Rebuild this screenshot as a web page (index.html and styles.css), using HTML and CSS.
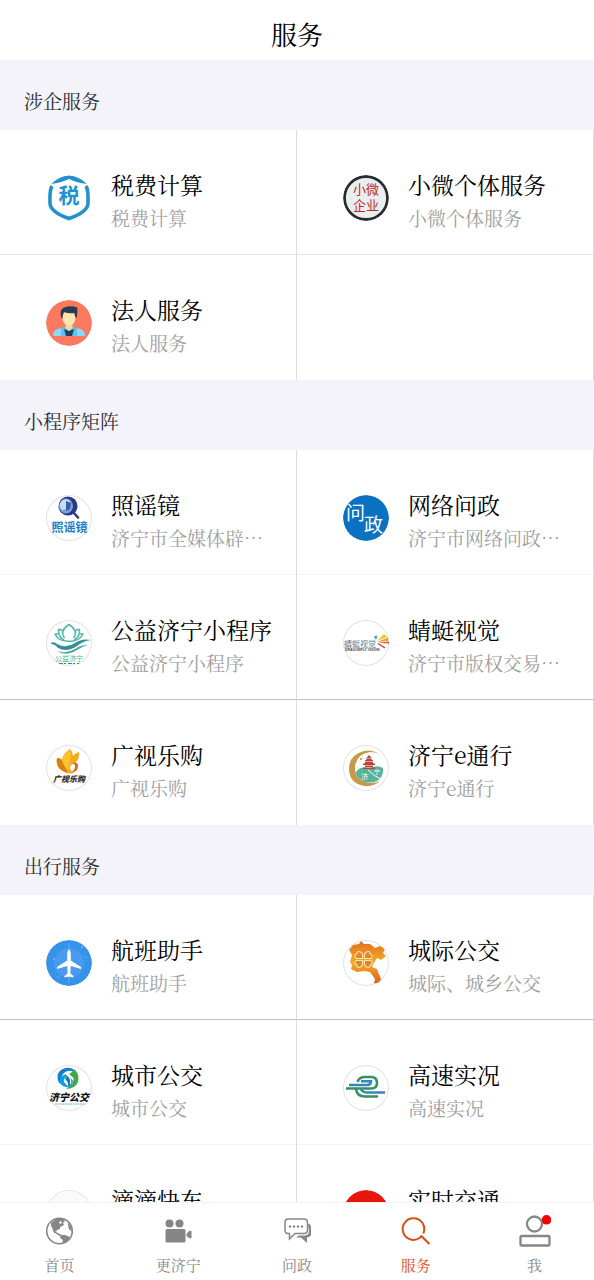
FILE: index.html
```html
<!DOCTYPE html>
<html lang="zh-CN">
<head>
<meta charset="utf-8">
<meta name="viewport" content="width=device-width, initial-scale=1">
<title>服务</title>
<link rel="stylesheet" href="styles.css">
</head>
<body>
<div class="app">
  <header class="topbar"><h1 class="topbar-title">服务</h1></header>

  <main class="content">
    <section>
      <h2 class="section-title">涉企服务</h2>
      <div class="grid">
        <a class="cell" href="#">
          <svg class="icon" viewBox="0 0 46 46" aria-hidden="true">
            <path d="M6 11Q3.500 15 4 28Q4 37 23 43.500Q42 37 42 28Q42.500 15 40 11" fill="none" stroke="#2391cf" stroke-width="3.600"/>
            <path d="M5 9Q13 1 23 0.500Q33 1 41 9Q31 8 23 4Q15 8 5 9Z" fill="#2391cf"/>
            <text class="glyph-bold" x="23" y="28" font-size="21" text-anchor="middle" fill="#2391cf">税</text>
          </svg>
          <div class="info"><h3 class="name">税费计算</h3><p class="desc">税费计算</p></div>
        </a>
        <a class="cell" href="#">
          <svg class="icon" viewBox="0 0 46 46" aria-hidden="true">
            <circle cx="23" cy="23" r="21.500" fill="#e9eeee" stroke="#2a2b2d" stroke-width="2.800"/>
            <text class="glyph" x="23" y="19" font-size="13" text-anchor="middle" fill="#c4282d">小微</text>
            <text class="glyph" x="23" y="35" font-size="13" text-anchor="middle" fill="#c4282d">企业</text>
          </svg>
          <div class="info"><h3 class="name">小微个体服务</h3><p class="desc">小微个体服务</p></div>
        </a>
        <a class="cell" href="#">
          <svg class="icon" viewBox="0 0 46 46" aria-hidden="true">
            <circle cx="23" cy="23" r="23" fill="#fb7a5f"/>
            <path d="M7 36Q7 30 12 29L19 27H27L34 29Q39 30 39 36Z" fill="#62c1ee"/>
            <path d="M7 36Q7 30 12 29L15 28V36ZM39 36Q39 30 34 29L31 28V36Z" fill="#8fd8f5"/>
            <path d="M18 29L23 31L28 29L26 36H20Z" fill="#293f58"/>
            <path d="M19.500 22H26.500V28L23 31L19.500 28Z" fill="#f5d9a0"/>
            <ellipse cx="23" cy="18" rx="6.500" ry="7.500" fill="#ffe5b0"/>
            <path d="M15.500 18Q13 11 17 8Q21 5.500 27 6.500L28 5.500L28 7L31 7Q32 11 30.500 18Q29 18 28.500 13Q23 14 18 12Q17 13 16.500 18Z" fill="#273b52"/>
          </svg>
          <div class="info"><h3 class="name">法人服务</h3><p class="desc">法人服务</p></div>
        </a>
        <div class="cell"></div>
      </div>
    </section>

    <section>
      <h2 class="section-title">小程序矩阵</h2>
      <div class="grid">
        <a class="cell line-faint" href="#">
          <svg class="icon ringed" viewBox="0 0 46 46" aria-hidden="true">
            <path d="M27 17L32 22.500" stroke="#2b3b86" stroke-width="2.600" stroke-linecap="round"/>
            <circle cx="22" cy="11" r="9.500" fill="#27398a"/>
            <ellipse cx="20" cy="11" rx="7" ry="7.500" fill="#7d9fd5"/>
            <path d="M15 7Q19 2 24 6L21 14L16 15Q12 11 15 7Z" fill="#c8dcf3"/>
            <path d="M20 6L25 8L24 14L20 16Z" fill="#3c5bab"/>
            <text class="glyph-bold" x="23.500" y="37" font-size="12" text-anchor="middle" fill="#1f80c4">照谣镜</text>
          </svg>
          <div class="info"><h3 class="name">照谣镜</h3><p class="desc">济宁市全媒体辟…</p></div>
        </a>
        <a class="cell line-faint" href="#">
          <svg class="icon" viewBox="0 0 46 46" aria-hidden="true">
            <circle cx="23" cy="23" r="23" fill="#0b72c2"/>
            <text class="glyph" x="3" y="25" font-size="19" fill="#fff">问</text>
            <text class="glyph" x="21" y="37" font-size="19" fill="#fff">政</text>
          </svg>
          <div class="info"><h3 class="name">网络问政</h3><p class="desc">济宁市网络问政…</p></div>
        </a>
        <a class="cell line-strong" href="#">
          <svg class="icon ringed" viewBox="0 0 46 46" aria-hidden="true">
            <g fill="none" stroke="#55b8aa" stroke-width="1.600" stroke-linejoin="round">
              <path d="M18.500 18Q13 11 23 4.500Q33 11 27.500 18"/>
              <path d="M17 11Q14 9 12.500 9.500Q12 17 18 20M29 11Q32 9 33.500 9.500Q34 17 28 20"/>
              <path d="M12 14L9 14Q12 20.500 20 21Q24 21.500 27 21Q34 20 37 14L34 14"/>
            </g>
            <path d="M5 23Q8 21 11 24Q20 29 29 23Q36 18 45 20Q37 21 31 26Q21 33 12 28Q9 24 5 24Z" fill="#348f99"/>
            <path d="M11 31Q20 34 29 29Q34 25 42 25Q35 27 31 30Q20 37 11 31Z" fill="#51aa9d"/>
            <text class="glyph" x="23" y="41" font-size="7" text-anchor="middle" fill="#45b68c">公益济宁</text>
            <path d="M13 43.500H34" stroke="#398399" stroke-width="1" stroke-dasharray="4 1 2 2"/>
          </svg>
          <div class="info"><h3 class="name">公益济宁小程序</h3><p class="desc">公益济宁小程序</p></div>
        </a>
        <a class="cell line-strong" href="#">
          <svg class="icon ringed" viewBox="0 0 46 46" aria-hidden="true">
            <text class="glyph" x="1" y="27" font-size="8" fill="#6c7480">蜻蜓视觉</text>
            <text class="latin-bold" x="2" y="31" font-size="3.500" fill="#444">DRAGONFLY VISION</text>
            <path d="M34 21L41 14L44 17Z" fill="#f1c52f"/>
            <path d="M34 22L45 17.500V21Z" fill="#f29f2d"/>
            <path d="M35 22.800L46 21.500V23.500Z" fill="#e45235"/>
            <path d="M33 20L31 16.500L34.500 15.500Z" fill="#24a5a2"/>
            <path d="M35 23.500L42 28" stroke="#bd3652" stroke-width="1.300"/>
          </svg>
          <div class="info"><h3 class="name">蜻蜓视觉</h3><p class="desc">济宁市版权交易…</p></div>
        </a>
        <a class="cell" href="#">
          <svg class="icon ringed" viewBox="0 0 46 46" aria-hidden="true">
            <path d="M21 28Q9 24 11 13Q14 13 16 15Q17 8 24 4Q27 7 27 11Q29 8 33 7Q34 14 29 18Q24 19 24 23Q25 27 28 28Q25 29 21 28Z" fill="#f6a91c"/>
            <path d="M11 13Q9 24 21 28Q22 22 18 17Q15 13 11 13Z" fill="#d98110"/>
            <path d="M16 15Q18 22 22 26Q26 15 24 4Q18 8 16 15Z" fill="#ffc331"/>
            <path d="M26 18Q32 16 32 21Q32 27 25 27.500Q29 25 29 21Q29 19 26 18Z" fill="#df6b19"/>
            <text class="glyph-heavy slanted" x="23" y="37" font-size="8" text-anchor="middle" fill="#302a28">广视乐购</text>
          </svg>
          <div class="info"><h3 class="name">广视乐购</h3><p class="desc">广视乐购</p></div>
        </a>
        <a class="cell" href="#">
          <svg class="icon ringed" viewBox="0 0 46 46" aria-hidden="true">
            <path d="M37 10Q30 4 21 6Q6 10 6 24Q6 38 21 41Q31 42 37 36Q28 40 20 36Q11 31 12 21Q14 9 27 7Q33 7 37 10Z" fill="#c59a4b"/>
            <path d="M13 27Q18 20 26 24Q33 19 40 23Q41 32 34 36Q24 40 17 34Q13 31 13 27Z" fill="#58b39b"/>
            <path d="M25 25Q32 32 38 34" fill="none" stroke="#fff" stroke-width="1"/>
            <path d="M26 10L29 13.500H23ZM22 15.500L24 14H28L30 15.500V16.500H22ZM20 19L23 17H29L32 19V20H20ZM22 20.500H30V22H22ZM20 22.500H32V24H20Z" fill="#ba4437"/>
            <text class="glyph" x="18" y="34" font-size="7" fill="#fff">济</text>
            <text class="glyph" x="31" y="29" font-size="6" fill="#fff">宁</text>
            <circle cx="18" cy="14" r="1" fill="#d77a46"/>
          </svg>
          <div class="info"><h3 class="name">济宁e通行</h3><p class="desc">济宁e通行</p></div>
        </a>
      </div>
    </section>

    <section>
      <h2 class="section-title">出行服务</h2>
      <div class="grid">
        <a class="cell line-strong" href="#">
          <svg class="icon" viewBox="0 0 46 46" aria-hidden="true">
            <circle cx="23" cy="23" r="23" fill="#3593ea"/>
            <circle cx="23" cy="23" r="15" fill="#489bee"/>
            <path d="M23 3V43" stroke="#82c1fa" stroke-width=".6"/>
            <path d="M23 9Q24.800 11 24.800 15V20.500L35 27V29L24.800 26L24.400 33.500L27.500 36V37.500L23 36.500L18.500 37.500V36L21.600 33.500L21.200 26L11 29V27L21.200 20.500V15Q21.200 11 23 9Z" fill="#fff"/>
            <g fill="#a9d5ff"><circle cx="8" cy="19" r=".7"/><circle cx="36" cy="7" r=".8"/><circle cx="40" cy="17" r=".6"/><circle cx="12" cy="37" r=".6"/></g>
          </svg>
          <div class="info"><h3 class="name">航班助手</h3><p class="desc">航班助手</p></div>
        </a>
        <a class="cell line-strong" href="#">
          <svg class="icon ringed" viewBox="0 0 46 46" aria-hidden="true">
            <defs><linearGradient id="map-fill" x2="0" y2="1"><stop stop-color="#df6f20"/><stop offset=".5" stop-color="#f3ae28"/><stop offset="1" stop-color="#d95d20"/></linearGradient></defs>
            <path d="M10 5L16 4L18 1L21 4L27 4L32 8L37 6L42 9L40 13L43 16L38 20L34 18L31 23L29 27L34 29L38 39L36 44L31 43L32 39L27 32L21 31L14 32L8 29L9 25L7 22L9 15L6 10Z" fill="url(#map-fill)"/>
            <g fill="#e3813c" stroke="#ffe9a5" stroke-width="1.100" stroke-linejoin="round">
              <path d="M19.500 18.500L13 18.500Q10.500 14.500 14 14Q14 10.500 17.500 12Q20 13 19.500 18.500Z"/>
              <path d="M21.500 18.500L28 18.500Q30.500 14.500 27 14Q27 10.500 23.500 12Q21 13 21.500 18.500Z"/>
              <path d="M19.500 20.500L13 20.500Q10.500 24.500 14 25Q14 28.500 17.500 27Q20 26 19.500 20.500Z"/>
              <path d="M21.500 20.500L28 20.500Q30.500 24.500 27 25Q27 28.500 23.500 27Q21 26 21.500 20.500Z"/>
            </g>
          </svg>
          <div class="info"><h3 class="name">城际公交</h3><p class="desc">城际、城乡公交</p></div>
        </a>
        <a class="cell line-faint" href="#">
          <svg class="icon ringed" viewBox="0 0 46 46" aria-hidden="true">
            <path d="M13 18Q9 9 15 5Q21 1 27 4L29 7Q22 4 18 8Q14 11 17 17Z" fill="#137fce"/>
            <path d="M13 17Q14 11 20 9L22 11Q17 13 18 17L23 22.500Q16 22 13 17Z" fill="#0a9ddf"/>
            <path d="M28 4Q34 9 32 17Q29 24 20 24Q28 20 27.500 13L23 9Q26 8 28 4Z" fill="#43a849"/>
            <path d="M22 10L27 16Q26 20 22 23Q23 17 19 14Z" fill="#117eb9"/>
            <path d="M20 9Q26 13 24.500 19" fill="none" stroke="#fff" stroke-width="1.200"/>
            <text class="glyph-heavy slanted" x="23" y="36" font-size="10" text-anchor="middle" fill="#111">济宁公交</text>
            <path d="M9 39H39" stroke="#67b8cc" stroke-width="1" stroke-dasharray="2 .5"/>
          </svg>
          <div class="info"><h3 class="name">城市公交</h3><p class="desc">城市公交</p></div>
        </a>
        <a class="cell line-faint" href="#">
          <svg class="icon ringed" viewBox="0 0 46 46" aria-hidden="true">
            <g fill="none" stroke-width="2.600">
              <path d="M14.500 17Q16 12 22 12H28Q34 12 34 18Q34 23.500 28 23.500H3" stroke="#35935e"/>
              <path d="M6 20H24Q28 20 28 16.300H18" stroke="#3785bb"/>
              <path d="M18 24Q19 27.500 25 27.500H42" stroke="#3785bb"/>
              <path d="M13 24Q14 31.500 22 31.500H35" stroke="#35935e"/>
            </g>
          </svg>
          <div class="info"><h3 class="name">高速实况</h3><p class="desc">高速实况</p></div>
        </a>
        <a class="cell" href="#">
          <svg class="icon ringed" viewBox="0 0 46 46" aria-hidden="true"><circle cx="23" cy="23" r="22" fill="#fafafa"/></svg>
          <div class="info"><h3 class="name">滴滴快车</h3><p class="desc">滴滴快车</p></div>
        </a>
        <a class="cell" href="#">
          <svg class="icon" viewBox="0 0 46 46" aria-hidden="true"><circle cx="23" cy="23" r="23" fill="#e8150b"/></svg>
          <div class="info"><h3 class="name">实时交通</h3><p class="desc">实时交通</p></div>
        </a>
      </div>
    </section>
  </main>

  <nav class="tabbar">
    <a class="tab" href="#">
      <svg class="tab-icon" viewBox="0 0 32 32" aria-hidden="true">
        <circle cx="16.500" cy="16" r="12.800" fill="none" stroke="currentColor" stroke-width="1.600"/>
        <path d="M8 8L13 4L20 4L22 6L20 8L21 10L17 12L17 14L14 15L13 17L10 14L8 11Z" fill="currentColor"/>
        <path d="M12 17L15 19L17 20L19 21M10 14L12 18" fill="none" stroke="currentColor" stroke-width="1.500"/>
        <path d="M18 20L22 20L27 22L25 26L19 28L20 25L17 23Z" fill="currentColor"/>
        <path d="M25 7L28 12L29 17L26 14L25 10Z" fill="currentColor"/>
        <path d="M17 6L19 7L18 9L16 8Z" fill="#fff"/>
      </svg>
      <span>首页</span>
    </a>
    <a class="tab" href="#">
      <svg class="tab-icon" viewBox="0 0 32 32" aria-hidden="true">
        <g fill="currentColor"><circle cx="7.500" cy="8.500" r="4"/><circle cx="17.500" cy="8.500" r="4"/><rect x="3.500" y="14" width="20" height="13.500" rx="1.500"/><path d="M24.500 19L27 16Q29 15.500 29.500 16V23Q29 23.500 27 23L24.500 21Z"/></g>
      </svg>
      <span>更济宁</span>
    </a>
    <a class="tab" href="#">
      <svg class="tab-icon" viewBox="0 0 32 32" aria-hidden="true">
        <path d="M27 8.500Q30 9 30 12V19Q30 22 26 22.500V28L20 22.500H15L18 20.500H24Q28 20 28 16Z" fill="currentColor"/>
        <path d="M7 4H23Q26.500 4 26.500 7.500V15Q26.500 18.500 23 18.500H14L8.500 24V18.500H7Q4 18.500 4 15V7.500Q4 4 7 4Z" fill="#fff" stroke="currentColor" stroke-width="1.500"/>
        <g fill="currentColor"><circle cx="9" cy="11.500" r="1.200"/><circle cx="13" cy="11.500" r="1.200"/><circle cx="17" cy="11.500" r="1.200"/><circle cx="21" cy="11.500" r="1.200"/></g>
      </svg>
      <span>问政</span>
    </a>
    <a class="tab is-active" href="#" aria-current="page">
      <svg class="tab-icon" viewBox="0 0 32 32" aria-hidden="true">
        <path d="M19.500 23A10.800 10.800 0 1 1 23.300 18.500M19.500 23L21.500 21.200L29.500 29" fill="none" stroke="currentColor" stroke-width="2"/>
      </svg>
      <span>服务</span>
    </a>
    <a class="tab" href="#">
      <svg class="tab-icon" viewBox="0 0 32 32" aria-hidden="true">
        <circle cx="15.500" cy="9" r="7.500" fill="none" stroke="currentColor" stroke-width="2.300"/>
        <rect x="1.500" y="21" width="29" height="9.500" rx="1" fill="none" stroke="currentColor" stroke-width="2.300"/>
        <circle cx="27.500" cy="4.800" r="4.800" fill="#f40000"/>
      </svg>
      <span>我</span>
    </a>
  </nav>
</div>
</body>
</html>
```
FILE: styles.css
```css
* {
  box-sizing: border-box;
}

body,
h1,
h2,
h3,
p {
  margin: 0;
  font-weight: 400;
}

body {
  background: #fff;
  color: #000;
  font-family: "Noto Serif CJK SC", "Noto Serif SC", "Noto Sans CJK SC", serif;
}

a {
  color: inherit;
  text-decoration: none;
}

.app {
  display: flex;
  flex-direction: column;
  height: 100vh;
}

.topbar {
  display: flex;
  flex: none;
  align-items: center;
  justify-content: center;
  height: 60px;
  padding-top: 8px;
}

.topbar-title {
  font-size: 26px;
  line-height: 40px;
}

.content {
  flex: 1;
  min-height: 0;
  overflow-y: auto;
  scrollbar-width: none;
}

.section-title {
  padding: 26px 24px 14px;
  background: #f3f3f9;
  color: #2c2c32;
  font-size: 19px;
  line-height: 30px;
}

.grid {
  display: grid;
  grid-template-columns: 1fr 1fr;
  grid-auto-rows: minmax(125px, auto);
}

.cell {
  display: flex;
  align-items: flex-start;
  gap: 19px;
  min-width: 0;
  padding: 38px 16px 20px 46px;
  border-right: 1px solid #dcdcdf;
  border-bottom: 1px solid #e4e4e6;
}

.cell:nth-last-child(-n + 2) {
  border-bottom: 0;
}

.line-faint {
  border-bottom-color: #f3f3f4;
}

.line-strong {
  border-bottom-color: #c2c2c4;
}

.icon {
  flex: none;
  width: 46px;
  height: 46px;
  margin-top: 7px;
  border-radius: 50%;
}

.ringed {
  box-shadow: inset 0 0 0 1px #e3e3e6;
}

.info {
  min-width: 0;
  white-space: nowrap;
}

.name {
  font-size: 23px;
  line-height: 33px;
}

.desc {
  overflow: hidden;
  color: #a0a0a0;
  font-size: 19px;
  line-height: 33px;
  text-overflow: ellipsis;
}

.glyph,
.glyph-bold,
.glyph-heavy {
  font-family: "Noto Sans CJK SC", sans-serif;
}

.glyph-bold {
  font-weight: 700;
}

.glyph-heavy {
  font-weight: 900;
}

.slanted {
  font-style: italic;
}

.latin-bold {
  font-family: "Liberation Sans", sans-serif;
  font-weight: 700;
}

.tabbar {
  display: grid;
  flex: none;
  grid-template-columns: repeat(5, 1fr);
  border-top: 1px solid #f3f3f4;
  background: #fff;
  color: #868686;
}

.tab {
  display: flex;
  flex-direction: column;
  align-items: center;
  gap: 7px;
  padding: 12px 0 4px;
  font-size: 15px;
  line-height: 22px;
}

.tab-icon {
  width: 32px;
  height: 32px;
}

.is-active {
  color: #dd4c16;
}
```
